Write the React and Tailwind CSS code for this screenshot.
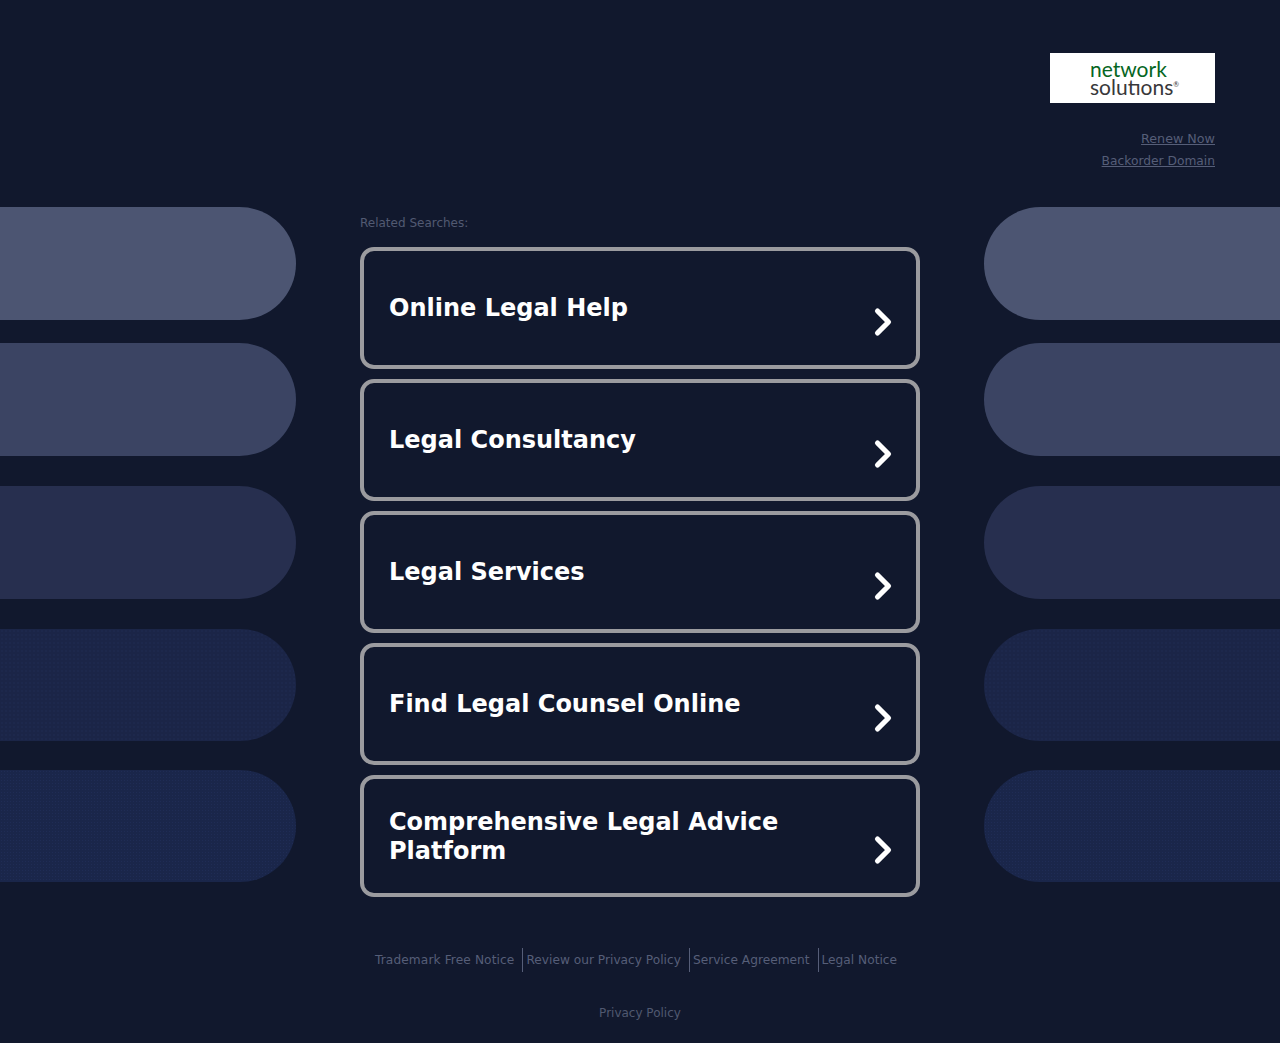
/**
 * Parked domain page: related search links with decorative side pills.
 */
import { ChevronRight } from 'lucide-react';

const SEARCHES = [
  'Online Legal Help',
  'Legal Consultancy',
  'Legal Services',
  'Find Legal Counsel Online',
  'Comprehensive Legal Advice Platform',
];

const PILLS = [
  { color: 'bg-[#4c5572]', className: 'h-[113px]' },
  { color: 'bg-[#3b4463]', className: 'h-[113px] mt-[23px]' },
  { color: 'bg-[#272f4f]', className: 'h-[113px] mt-[30px]' },
  {
    color: 'bg-[#1b2547]',
    className: 'h-[112px] mt-[30px] bg-[radial-gradient(#1d284c_1px,transparent_1px)] bg-[size:4px_4px]',
  },
  {
    color: 'bg-[#1a264a]',
    className: 'h-[112px] mt-[29px] bg-[radial-gradient(#1f2c55_1px,transparent_1px)] bg-[size:3px_3px]',
  },
];

function Pills({ side }) {
  const shape = side === 'left' ? 'rounded-r-[57px]' : 'rounded-l-[57px]';
  return (
    <div className="w-[296px] shrink-0 pt-[207px] flex flex-col">
      {PILLS.map((pill) => (
        <div key={pill.color} className={`${pill.color} ${pill.className} ${shape}`} />
      ))}
    </div>
  );
}

function Logo() {
  return (
    <div className="w-[165px] h-[50px] bg-white flex flex-col justify-center pl-[40px] font-['Lato',sans-serif]">
      <div className="text-[21px] leading-[17px] text-[#06661f] -mt-px">network</div>
      <div className="text-[21px] leading-[17px] mt-px text-[#38383a] whitespace-nowrap">
        solutıons<span className="text-[7px] align-super leading-none">®</span>
      </div>
    </div>
  );
}

function SearchLink({ label }) {
  return (
    <a
      href="#"
      className="h-[122px] border-4 border-[#9b9b9f] rounded-[14px] flex items-center pl-[25px] pr-[11px] text-white"
    >
      <span className="flex-1 pt-px text-[24px] leading-[29px] font-bold">{label}</span>
      <ChevronRight className="ml-[40px] mt-[27px]" size={44} strokeWidth={2.8} />
    </a>
  );
}

const FOOTER_LINKS = ['Trademark Free Notice', 'Review our Privacy Policy', 'Service Agreement', 'Legal Notice'];

export default function App() {
  return (
    <div className="min-h-[1043px] bg-[#11182d] relative overflow-hidden font-['DejaVu_Sans',sans-serif]">
      {/* Side pills + centre column */}
      <div className="flex justify-between">
        <Pills side="left" />
        <div className="w-[560px] pt-[216px]">
          <div className="text-[12px] leading-[15px] text-[#525a72] h-[31px]">Related Searches:</div>
          <div className="flex flex-col gap-[10px]">
            {SEARCHES.map((label) => (
              <SearchLink key={label} label={label} />
            ))}
          </div>
          <div className="mt-[51px] flex justify-center items-center text-[12.2px] text-[#565e78] -translate-x-[4px]">
            {FOOTER_LINKS.map((label, i) => (
              <a
                key={label}
                href="#"
                className={`h-[24px] leading-[24px] ${i > 0 ? 'border-l border-[#565e78] pl-[3px] ml-[8px]' : 'tracking-[0.1px]'}`}
              >
                {label}
              </a>
            ))}
          </div>
          <div className="mt-[29px] text-center text-[12px] leading-[24px] text-[#505870]">Privacy Policy</div>
        </div>
        <Pills side="right" />
      </div>

      {/* Logo and renew links, top right */}
      <div className="absolute top-[53px] right-[65px] flex flex-col items-end">
        <Logo />
        <a href="#" className="mt-[25px] text-[12.7px] leading-[22px] text-[#565e78] underline">Renew Now</a>
        <a href="#" className="text-[12.25px] leading-[22px] text-[#565e78] underline">Backorder Domain</a>
      </div>
    </div>
  );
}
